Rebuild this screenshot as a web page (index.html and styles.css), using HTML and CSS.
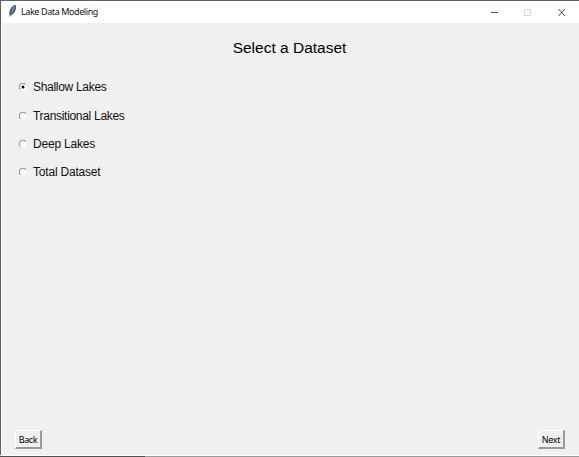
FILE: index.html
```html
<!DOCTYPE html>
<html lang="en">
<head>
<meta charset="utf-8">
<title>Lake Data Modeling</title>
<link rel="stylesheet" href="styles.css">
</head>
<body>
<div class="window">
  <header class="titlebar">
    <svg class="feather" width="10" height="14" viewBox="0 0 10 14"><path d="M1.800 12C0.500 8 2 2.500 7.500.7 9 4 7 9 3 11.500Z" fill="#48515e"/><path d="M2.800 8.500C3 6 4.500 3.200 7.200 1.500 7 5 5 8.300 2.800 8.500Z" fill="#5b91c4"/><path d="M1.700 13 4.500 7" stroke="#909aa5" stroke-width=".7"/></svg>
    <span class="app-name">Lake Data Modeling</span>
    <svg class="controls" width="88" height="22" viewBox="0 0 88 22" fill="none"><path d="M6 11.500h7" stroke="#555"/><path d="M39.500 8.500h6v6h-6z" stroke="#d6d6d6"/><path d="m73.500 8 6.500 7m0-7-6.500 7" stroke="#444"/></svg>
  </header>
  <main class="content">
    <h1 class="heading">Select a Dataset</h1>
    <div class="options">
      <div class="option"><svg class="radio" width="8" height="8" viewBox="0 0 8 8"><circle cx="4" cy="4" r="3.600" fill="#fff"/><path d="M1.300 6.700A3.500 3.500 0 0 1 6.700 1.300" fill="none" stroke="#777"/><circle cx="4" cy="4" r="1.500"/></svg><span class="label">Shallow Lakes</span></div>
      <div class="option"><svg class="radio" width="8" height="8" viewBox="0 0 8 8"><circle cx="4" cy="4" r="3.600" fill="#fff"/><path d="M1.300 6.700A3.500 3.500 0 0 1 6.700 1.300" fill="none" stroke="#777"/></svg><span class="label">Transitional Lakes</span></div>
      <div class="option"><svg class="radio" width="8" height="8" viewBox="0 0 8 8"><circle cx="4" cy="4" r="3.600" fill="#fff"/><path d="M1.300 6.700A3.500 3.500 0 0 1 6.700 1.300" fill="none" stroke="#777"/></svg><span class="label wide">Deep Lakes</span></div>
      <div class="option"><svg class="radio" width="8" height="8" viewBox="0 0 8 8"><circle cx="4" cy="4" r="3.600" fill="#fff"/><path d="M1.300 6.700A3.500 3.500 0 0 1 6.700 1.300" fill="none" stroke="#777"/></svg><span class="label wide">Total Dataset</span></div>
    </div>
    <footer class="actions"><button class="button">Back</button><button class="button">Next</button></footer>
  </main>
  <div class="bottom-edge"></div>
</div>
</body>
</html>
```
FILE: styles.css
```css
* { box-sizing: border-box; }
body { margin: 0; overflow: hidden; }
.window { width: 579px; height: 457px; display: flex; flex-direction: column; border-left: 1px solid #606060; border-top: 1px solid #606060; background: #fff; }
.titlebar { height: 22px; flex: none; display: flex; align-items: center; padding-left: 7px; background: #fff; }
.feather { margin-right: 3px; margin-top: -2px; }
.app-name { font: 9px/14px "Noto Sans", sans-serif; letter-spacing: -0.4px; color: #111; white-space: nowrap; }
.controls { margin-left: auto; margin-right: 6px; margin-top: -1px; }
.content { flex: 1; margin-left: 1px; background: #f0f0f0; display: flex; flex-direction: column; }
.heading { margin: 14px 2px 0 0; text-align: center; font: 15.5px/22px "Liberation Sans", sans-serif; color: #000; }
.options { padding: 14.3px 0 0 17px; }
.option { height: 28.2px; display: flex; align-items: center; }
.radio { margin-right: 6px; flex: none; }
.label { font: 12px/16px "Liberation Sans", sans-serif; letter-spacing: -0.3px; color: #111; white-space: nowrap; }
.wide { letter-spacing: -0.2px; }
.actions { margin-top: auto; display: flex; justify-content: space-between; padding: 0 14px 6px 13px; }
.button { width: 27px; height: 19px; padding: 1px 0 0; border: solid; border-width: 1px 2px 2px 1px; border-color: #fff #999 #999 #fff; background: #f0f0f0; font: 9px/14px "Noto Sans", sans-serif; letter-spacing: -0.35px; color: #000; }
.bottom-edge { flex: none; height: 2px; margin-left: -1px; border-top: 1px solid #fff; background: linear-gradient(to right, #505050 145px, #999 145px); background-clip: padding-box; }
```
